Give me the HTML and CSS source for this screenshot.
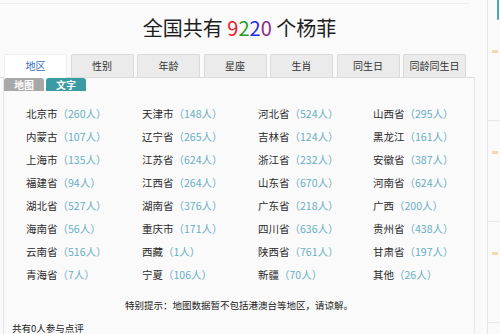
FILE: index.html
```html
<!DOCTYPE html>
<html>
	<head>
		<meta charset="utf-8">
		<title>全国共有9220个杨菲</title>
		<link rel="stylesheet" href="styles.css">
	</head>
	<body>
		<div class="page">
		<div class="main">
			<div class="topline"></div>
			<h1 class="title">全国共有 <span class="n1">9</span><span class="n2">2</span><span class="n3">2</span><span class="n4">0</span> 个杨菲</h1>
			<!-- 分类标签 -->
			<ul class="tabs">
				<li class="cur">地区</li>
				<li>性别</li>
				<li>年龄</li>
				<li>星座</li>
				<li>生肖</li>
				<li>同生日</li>
				<li>同龄同生日</li>
			</ul>
			<div class="panel">
				<div class="subtabs">
					<span class="sub-map">地图</span>
					<span class="sub-text">文字</span>
				</div>
				<ul class="area-list">
					<li>北京市<em>（260人）</em></li>
					<li>天津市<em>（148人）</em></li>
					<li>河北省<em>（524人）</em></li>
					<li>山西省<em>（295人）</em></li>
					<li>内蒙古<em>（107人）</em></li>
					<li>辽宁省<em>（265人）</em></li>
					<li>吉林省<em>（124人）</em></li>
					<li>黑龙江<em>（161人）</em></li>
					<li>上海市<em>（135人）</em></li>
					<li>江苏省<em>（624人）</em></li>
					<li>浙江省<em>（232人）</em></li>
					<li>安徽省<em>（387人）</em></li>
					<li>福建省<em>（94人）</em></li>
					<li>江西省<em>（264人）</em></li>
					<li>山东省<em>（670人）</em></li>
					<li>河南省<em>（624人）</em></li>
					<li>湖北省<em>（527人）</em></li>
					<li>湖南省<em>（376人）</em></li>
					<li>广东省<em>（218人）</em></li>
					<li>广西<em>（200人）</em></li>
					<li>海南省<em>（56人）</em></li>
					<li>重庆市<em>（171人）</em></li>
					<li>四川省<em>（636人）</em></li>
					<li>贵州省<em>（438人）</em></li>
					<li>云南省<em>（516人）</em></li>
					<li>西藏<em>（1人）</em></li>
					<li>陕西省<em>（761人）</em></li>
					<li>甘肃省<em>（197人）</em></li>
					<li>青海省<em>（7人）</em></li>
					<li>宁夏<em>（106人）</em></li>
					<li>新疆<em>（70人）</em></li>
					<li>其他<em>（26人）</em></li>
				</ul>
				<p class="note">特别提示：地图数据暂不包括港澳台等地区，请谅解。</p>
				<p class="comments">共有0人参与点评</p>
			</div>
		</div>
		<!-- 右侧栏 -->
		<div class="side">
			<div class="side-top"></div>
			<div class="side-row"><i></i></div>
			<div class="side-row"><i></i></div>
			<div class="side-row"><i></i></div>
			<div class="side-row"><i></i></div>
		</div>
		</div>
	</body>
</html>
```

FILE: styles.css
```css
*{
	margin: 0;
	padding: 0;
}
body{
	background: #fafafa;
	font-family: "Noto Sans CJK SC", "Liberation Sans", sans-serif;
	color: #333;
}
ul{
	list-style: none;
}
.page{
	display: flex;
	width: 500px;
	height: 334px;
	overflow: hidden;
}
.main{
	width: 476px;
	padding-top: 3px;
}
.topline{
	border-top: 1px solid #ededed;
	margin-right: 6px;
}
.title{
	margin-top: 12px;
	padding-left: 4px;
	font-size: 20px;
	line-height: 24px;
	font-weight: normal;
	text-align: center;
	color: #1e1e1e;
}
.n1{ color: #e8222a; }
.n2{ color: #2a9a2a; }
.n3{ color: #2a2ad8; }
.n4{ color: #8a2a8a; }
.tabs{
	display: flex;
	margin-top: 14px;
	padding-left: 4px;
	height: 23px;
	border-bottom: 1px solid #dcdcdc;
}
.tabs li{
	width: 61px;
	height: 22px;
	margin-right: 3.5px;
	border: 1px solid #dadada;
	border-bottom: none;
	border-radius: 2px 2px 0 0;
	background: #ebebeb;
	font-size: 10px;
	line-height: 22px;
	text-align: center;
	color: #333;
}
.tabs li.cur{
	height: 23px;
	background: #fff;
	color: #3a6cc6;
	border-color: #eee;
}
.panel{
	margin-left: 3px;
	border-left: 1px solid #e4e4e4;
	border-right: 1px solid #e4e4e4;
	height: 256px;
}
.subtabs{
	display: flex;
	gap: 2px;
}
.subtabs span{
	width: 40px;
	height: 13px;
	border-radius: 3px 3px 0 0;
	font-size: 10px;
	font-weight: bold;
	line-height: 13px;
	text-align: center;
	color: #fff;
}
.sub-map{
	background: #a8a8a8;
}
.sub-text{
	background: #3b9ba3;
}
.area-list{
	display: grid;
	grid-template-columns: 116px 116px 115px 1fr;
	grid-auto-rows: 23px;
	margin-top: 11px;
	padding-left: 22px;
}
.area-list li{
	font-size: 10.5px;
	line-height: 23px;
	color: #2b2b2b;
	white-space: nowrap;
}
.area-list em{
	font-style: normal;
	color: #67aec4;
}
.note{
	margin-top: 12px;
	font-size: 9.5px;
	line-height: 14px;
	text-align: center;
	color: #222;
}
.comments{
	margin-top: 9px;
	padding-left: 8px;
	font-size: 9.5px;
	line-height: 14px;
	color: #222;
}
.side{
	margin-left: 12px;
	width: 12px;
	border-left: 1px solid #e6e6e6;
}
.side-top{
	height: 19px;
	margin-left: 9px;
	border-left: 2px solid #4aa8b0;
	border-bottom: 1px solid #ddd;
}
.side-row{
	height: 70px;
	border-bottom: 1px solid #e8e8e8;
	padding-top: 30px;
}
.side-row i{
	display: block;
	width: 6px;
	height: 3px;
	margin-left: 4px;
	background: #f3d9b0;
}
```
